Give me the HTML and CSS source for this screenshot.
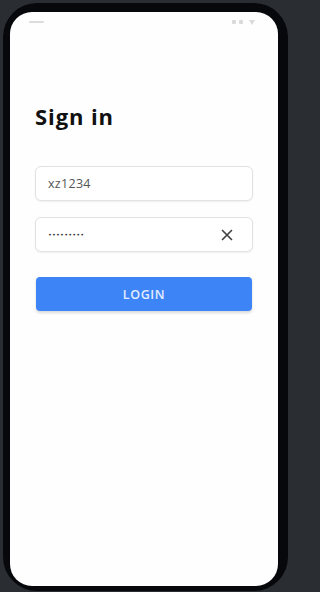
FILE: index.html
```html
<!DOCTYPE html>
<html>
<head>
<meta charset="utf-8">
<link rel="stylesheet" href="styles.css">
</head>
<body>
<div class="phone">
  <div class="screen">
    <div class="status">
      <span class="dash"></span>
      <span class="icons">
        <span class="sq"></span><span class="sq"></span>
        <svg class="tri" width="6" height="5" viewBox="0 0 6 5"><path d="M0 0H6L3 5Z" fill="#dadada"/></svg>
      </span>
    </div>
    <h1 class="title">Sign in</h1>
    <div class="form">
      <div class="field"><span class="value">xz1234</span></div>
      <div class="field"><span class="dots">•••••••••</span>
        <svg class="clear" width="12" height="12" viewBox="0 0 12 12"><path d="M1.5 1.5L10.5 10.5M10.5 1.5L1.5 10.5" stroke="#444" stroke-width="1.7" stroke-linecap="round"/></svg>
      </div>
      <button class="login">LOGIN</button>
    </div>
  </div>
</div>
</body>
</html>
```
FILE: styles.css
```css
html, body { margin: 0; padding: 0; }
body {
  background: #2a2d32;
  width: 292px;
  height: 592px;
  overflow: hidden;
  font-family: "Open Sans", "Liberation Sans", sans-serif;
}
.phone {
  box-sizing: border-box;
  margin: 3px 4px 0 3px;
  height: 588px;
  background: #06080c;
  border-radius: 34px;
  padding: 9px 10px 5px 7px;
}
.screen {
  box-sizing: border-box;
  height: 100%;
  background: #fefefe;
  border-radius: 22px;
  padding: 7px 25px 0 25px;
  display: flex;
  flex-direction: column;
}
.status {
  height: 6px;
  display: flex;
  justify-content: space-between;
  align-items: center;
  margin: 0 -2px 0 -6px;
}
.dash {
  width: 15px;
  height: 2px;
  background: #dcdcdc;
  border-radius: 1px;
}
.icons { display: flex; align-items: center; gap: 3px; }
.sq { width: 4px; height: 4px; background: #dadada; border-radius: 1px; }
.tri { margin-left: 3px; }
.title {
  margin: 78px 0 0 0;
  font-size: 22px;
  line-height: 26px;
  font-weight: 700;
  letter-spacing: 0.9px;
  color: #111;
}
.form {
  margin-top: 37px;
  display: flex;
  flex-direction: column;
}
.field {
  box-sizing: border-box;
  height: 35px;
  border: 1px solid #e2e2e2;
  border-radius: 6px;
  box-shadow: 0 1px 2px rgba(0,0,0,0.06);
  background: #fff;
  display: flex;
  align-items: center;
  justify-content: space-between;
  padding: 0 19px 0 12px;
  margin-bottom: 16px;
}
.value { font-size: 12.5px; color: #555; letter-spacing: 0.3px; }
.dots {
  font-family: "DejaVu Sans", sans-serif;
  font-size: 6.5px;
  color: #3a3a3a;
  letter-spacing: 0.2px;
}
.login {
  margin-top: 9px;
  height: 34px;
  border: none;
  border-radius: 4px;
  background: #3d85f7;
  color: #e4edff;
  font-family: "Open Sans", "Liberation Sans", sans-serif;
  font-size: 12.5px;
  font-weight: 600;
  letter-spacing: 0.6px;
  box-shadow: 0 2px 3px rgba(0,0,0,0.15);
  padding: 0;
  margin-left: 1px;
  margin-right: 1px;
}
```
